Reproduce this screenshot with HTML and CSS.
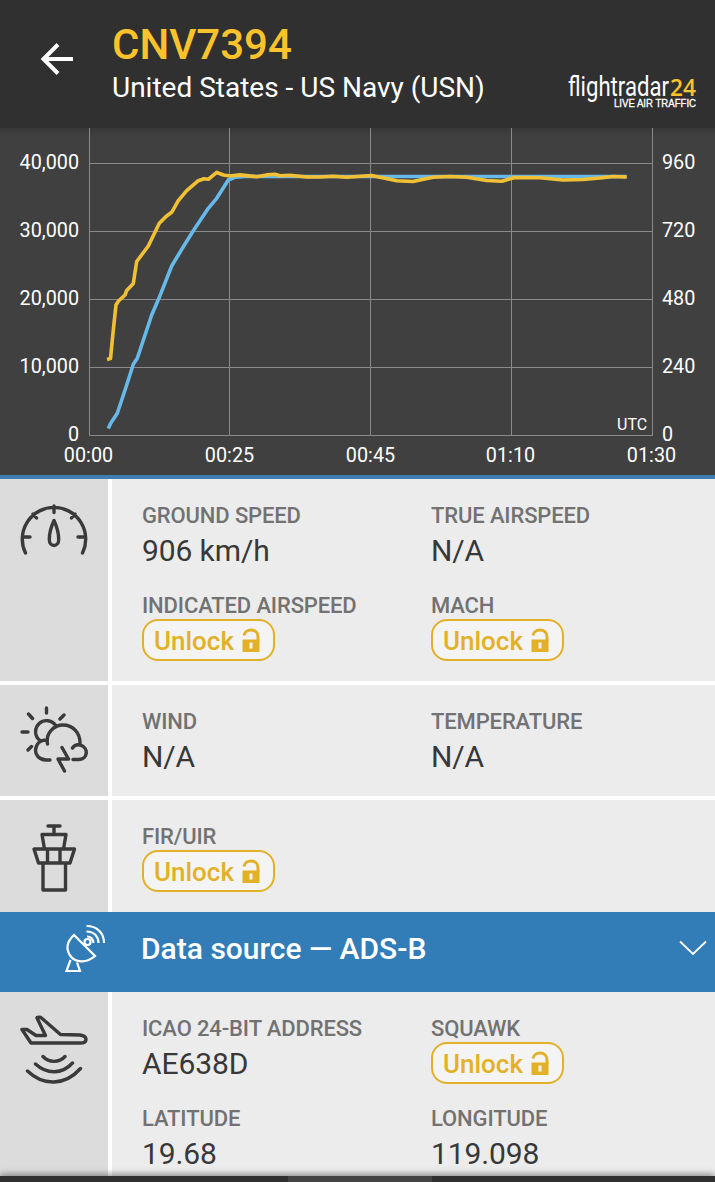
FILE: index.html
```html
<!DOCTYPE html>
<html lang="en">
<head>
  <meta charset="UTF-8">
  <meta name="viewport" content="width=device-width, initial-scale=1.0">
  <title>CNV7394</title>
  <link rel="stylesheet" href="styles.css">
</head>
<body>

  <!-- Shared padlock icon -->
  <svg class="symbols" width="0" height="0">
    <symbol id="lock" viewBox="0 0 18 25">
      <path d="M2 7.500C2.500 4 5.500 2 9 2C13 2 16 4.500 16 9V13" fill="none" stroke="#e2b127" stroke-width="3"/>
      <path fill-rule="evenodd" d="M0.500 11.500H17.500V24H0.500ZM7.500 14.500V20.500H10.500V14.500Z" fill="#e2b127"/>
    </symbol>
  </svg>

  <header class="header">
    <svg class="back" width="34" height="32" viewBox="0 0 34 32">
      <path d="M33 16H3M18 1.500L3.500 16L18 30.500" fill="none" stroke="#fff" stroke-width="4"/>
    </svg>
    <div class="title">
      <h1>CNV7394</h1>
      <p>United States - US Navy (USN)</p>
    </div>
    <svg class="logo" width="132" height="46" viewBox="0 0 132 46">
      <text class="logo-name" x="3" y="26" textLength="101" lengthAdjust="spacingAndGlyphs">flightradar</text>
      <text class="logo-num" x="105" y="26" textLength="26" lengthAdjust="spacingAndGlyphs">24</text>
      <text class="logo-tag" x="49" y="37" textLength="82" lengthAdjust="spacingAndGlyphs">LIVE AIR TRAFFIC</text>
    </svg>
  </header>

  <section class="chart">
    <svg width="715" height="347" viewBox="0 128 715 347">
      <path class="grid" d="M89.500 128V435.500M229.500 128V435.500M370.500 128V435.500M511.500 128V435.500M652.500 128V435.500M89 163.500H653M89 231.500H653M89 299.500H653M89 367.500H653M89 435.500H653"/>
      <polyline class="altitude" points="108.300,428.500 110.700,423.300 117.300,413.300 126.700,385 133.300,364.300 137.300,358.300 151.700,315 160,295.700 171.700,266 183.300,246.700 193.300,230.700 208.300,208.300 216.700,198.300 228.300,180 235,177.300 245,176.500 626.500,176.500"/>
      <polyline class="speed" points="107,359.500 110.500,358.500 113.300,330 116,305 118.500,301 125,295 126.700,290.500 133.300,283.500 136.700,261.500 148.300,246 159.300,223.300 166,216.500 171.700,212.300 178.300,200.700 186.700,190.700 198.300,180.700 204,178.700 208.300,179.300 216.700,172.300 223.300,175 230,176 240,174.900 256.700,176.700 266.700,174.900 275,174.200 280,175.800 290,175.200 306.700,177 320,177 333,176.300 346.700,177.300 371.700,175.500 396.700,180.700 413,181.500 433,177.300 450,176.500 466.700,177.300 486.700,180.500 501.700,181.200 515,177.500 540,177.700 563,180 583,179.500 600,178 613,176.500 626.700,177"/>
      <g class="axis end">
        <text x="79" y="169">40,000</text>
        <text x="79" y="237">30,000</text>
        <text x="79" y="305">20,000</text>
        <text x="79" y="373">10,000</text>
        <text x="79" y="441">0</text>
      </g>
      <g class="axis">
        <text x="662" y="169">960</text>
        <text x="662" y="237">720</text>
        <text x="662" y="305">480</text>
        <text x="662" y="373">240</text>
        <text x="662" y="441">0</text>
      </g>
      <g class="axis middle">
        <text x="88.500" y="462">00:00</text>
        <text x="229.500" y="462">00:25</text>
        <text x="370.500" y="462">00:45</text>
        <text x="510.500" y="462">01:10</text>
        <text x="651.500" y="462">01:30</text>
      </g>
      <text class="utc" x="617" y="430">UTC</text>
    </svg>
  </section>

  <section class="row row-speed">
    <div class="icon">
      <svg width="108" height="100" viewBox="0 0 108 100">
        <path d="M25.500 74A31.700 31.700 0 1 1 82.500 74M54 27V33.500M33 35L36.500 39M75 35L71.500 39M23 58H30M85 58H78M54 41.500C51 48 49.300 56 49.300 60.500C49.300 68.500 58.700 68.500 58.700 60.500C58.700 56 57 48 54 41.500Z"/>
      </svg>
    </div>
    <div class="data">
      <div class="item"><h3>GROUND SPEED</h3><p>906 km/h</p></div>
      <div class="item"><h3>TRUE AIRSPEED</h3><p>N/A</p></div>
      <div class="item"><h3>INDICATED AIRSPEED</h3><button class="unlock">Unlock<svg width="18" height="25"><use href="#lock"/></svg></button></div>
      <div class="item"><h3>MACH</h3><button class="unlock">Unlock<svg width="18" height="25"><use href="#lock"/></svg></button></div>
    </div>
  </section>

  <section class="row row-weather">
    <div class="icon">
      <svg width="108" height="100" viewBox="0 0 108 100">
        <path d="M46.500 23V28M28.500 29L32.500 33.500M64 30L60 34M22 47H28M28 65L31.500 61.500M40 55.500A11 11 0 1 1 56 41M50 75H46C38 74.500 35.500 69 35.500 65C36 59 40 55 46.500 55M47.500 59C45.500 48 54 40 63 40C73 40 80.500 48 80 59M72.500 63C74.500 60 77.500 59.500 80 60C89 62 88 74.500 79 74.500H73M62 62.500L68.500 74H58L64.500 86"/>
      </svg>
    </div>
    <div class="data">
      <div class="item"><h3>WIND</h3><p>N/A</p></div>
      <div class="item"><h3>TEMPERATURE</h3><p>N/A</p></div>
    </div>
  </section>

  <section class="row row-fir">
    <div class="icon">
      <svg width="108" height="100" viewBox="0 0 108 100">
        <path d="M48 26H60M54 26V34M42 34.500H66L63.500 49H44.500ZM34 49H74.500L70 63H38.500ZM47.500 49V63M60 49V63M43 64V90H65.500V64"/>
      </svg>
    </div>
    <div class="data">
      <div class="item"><h3>FIR/UIR</h3><button class="unlock">Unlock<svg width="18" height="25"><use href="#lock"/></svg></button></div>
    </div>
  </section>

  <section class="source">
    <svg class="dish" width="44" height="50" viewBox="0 0 44 50">
      <path d="M12 11L33 32C24 40 13 38.500 8 31.500C4 25 5 17.500 12 11ZM8.500 36L4.500 47H18L15 38.500M24.500 2C35 2 42 9 42 19M24.500 7.500C32 7.500 36.500 12.500 36.500 19M25 12.500C29 12.500 31 15 31.500 19"/>
      <circle cx="25.500" cy="18" r="3"/>
    </svg>
    <h2>Data source — ADS-B</h2>
    <svg class="chevron" width="28" height="16" viewBox="0 0 28 16">
      <path d="M1 1.500L14 14L27 1.500"/>
    </svg>
  </section>

  <section class="row row-adsb">
    <div class="icon">
      <svg width="108" height="100" viewBox="0 0 108 100">
        <path d="M31 51L22 37.500H27L36 43.500H45.500L37 26C37 25 40.500 25 41.500 26L60.500 42.500L80 43C88 44 88 51 80 51ZM43 64.500C49 71 59 71 65 64.500M35.500 72C47 82.500 62 82.500 72.500 71M27.500 79C43 94 65 94 80.500 76.500"/>
      </svg>
    </div>
    <div class="data">
      <div class="item"><h3>ICAO 24-BIT ADDRESS</h3><p>AE638D</p></div>
      <div class="item"><h3>SQUAWK</h3><button class="unlock">Unlock<svg width="18" height="25"><use href="#lock"/></svg></button></div>
      <div class="item"><h3>LATITUDE</h3><p>19.68</p></div>
      <div class="item"><h3>LONGITUDE</h3><p>119.098</p></div>
    </div>
  </section>

  <footer class="bottom"><div class="handle"></div></footer>

</body>
</html>
```
FILE: styles.css
```css
body {
  margin: 0;
  width: 715px;
  height: 1182px;
  overflow: hidden;
  background-color: #fff;
  font-family: Roboto, "Liberation Sans", sans-serif;
}

h1, h2, h3, p {
  margin: 0;
}

svg {
  display: block;
}

.symbols {
  display: none;
}

/* Header */
.header {
  display: flex;
  height: 128px;
  background-color: #303030;
  color: #fff;
}

.back {
  margin: 43px 0 0 40px;
}

.title {
  flex: 1;
  padding: 20px 0 0 38px;
}

.title h1 {
  color: #fbc32b;
  font-size: 42px;
  line-height: 50px;
  font-weight: 500;
}

.title p {
  font-size: 28px;
  line-height: 36px;
  white-space: nowrap;
}

.logo {
  margin: 70px 18px 0 0;
}

.logo-name {
  fill: #fff;
  font-size: 28px;
}

.logo-num {
  fill: #fbc32b;
  font-family: "Open Sans", sans-serif;
  font-size: 24px;
  font-weight: 600;
}

.logo-tag {
  fill: #fff;
  stroke: #fff;
  stroke-width: 0.3;
  font-family: "Liberation Sans", sans-serif;
  font-size: 10px;
}

/* Chart */
.chart {
  height: 347px;
  border-bottom: 4px solid #3d7eb3;
  background: linear-gradient(#383838, #404040 8px);
}

.grid {
  fill: none;
  stroke: #8a8a8a;
}

.altitude, .speed {
  fill: none;
  stroke-width: 3.6;
  stroke-linejoin: round;
}

.altitude {
  stroke: #66b9e8;
}

.speed {
  stroke: #f2c035;
}

.axis {
  fill: #fff;
  font-size: 19.8px;
}

.end {
  text-anchor: end;
}

.middle {
  text-anchor: middle;
}

.utc {
  fill: #fff;
  font-size: 16px;
}

/* Data rows */
.row {
  display: flex;
  gap: 4px;
  margin-bottom: 4px;
}

.row-speed {
  height: 202px;
}

.row-weather {
  height: 111px;
}

.row-fir {
  height: 112px;
  margin-bottom: 0;
}

.row-adsb {
  height: 184px;
  margin-bottom: 0;
}

.icon {
  width: 108px;
  background-color: #dcdcdc;
}

.icon path {
  fill: none;
  stroke: #3a3a3a;
  stroke-width: 3.4;
  stroke-linecap: round;
  stroke-linejoin: round;
}

.data {
  flex: 1;
  display: grid;
  grid-template-columns: 289px 1fr;
  grid-auto-rows: 90px;
  box-sizing: border-box;
  padding: 23px 0 0 30px;
  background-color: #ececec;
}

.item h3 {
  color: #727272;
  font-size: 22px;
  line-height: 27px;
  font-weight: 500;
  letter-spacing: -0.13px;
}

.item p {
  color: #383838;
  font-size: 30px;
  line-height: 44px;
  letter-spacing: -0.1px;
}

.unlock {
  display: flex;
  align-items: center;
  gap: 8px;
  box-sizing: border-box;
  width: 133px;
  height: 42px;
  margin: 0;
  padding: 1px 0 0 10px;
  border: 2px solid #e2b127;
  border-radius: 16px;
  background-color: #f4f4f4;
  color: #e2b127;
  font-family: inherit;
  font-size: 26px;
  font-weight: 500;
}

.unlock svg {
  margin-top: -1px;
}

/* Data source bar */
.source {
  display: flex;
  height: 80px;
  background-color: #327db7;
  color: #fff;
}

.source path, .source circle {
  fill: none;
  stroke: #fff;
  stroke-width: 2.2;
}

.dish {
  margin: 12px 0 0 62px;
}

.source h2 {
  flex: 1;
  padding: 17px 0 0 35px;
  font-size: 30px;
  line-height: 40px;
  font-weight: 500;
}

.source .chevron path {
  stroke-width: 1.8;
}

.chevron {
  margin: 28px 8px 0 0;
}

/* Bottom edge */
.bottom {
  position: relative;
  height: 6px;
  background-color: #303030;
  box-shadow: 0 -1px 7px rgba(0, 0, 0, 0.55);
}

.handle {
  width: 144px;
  height: 6px;
  margin-left: 288px;
  background-color: #444;
}
```
